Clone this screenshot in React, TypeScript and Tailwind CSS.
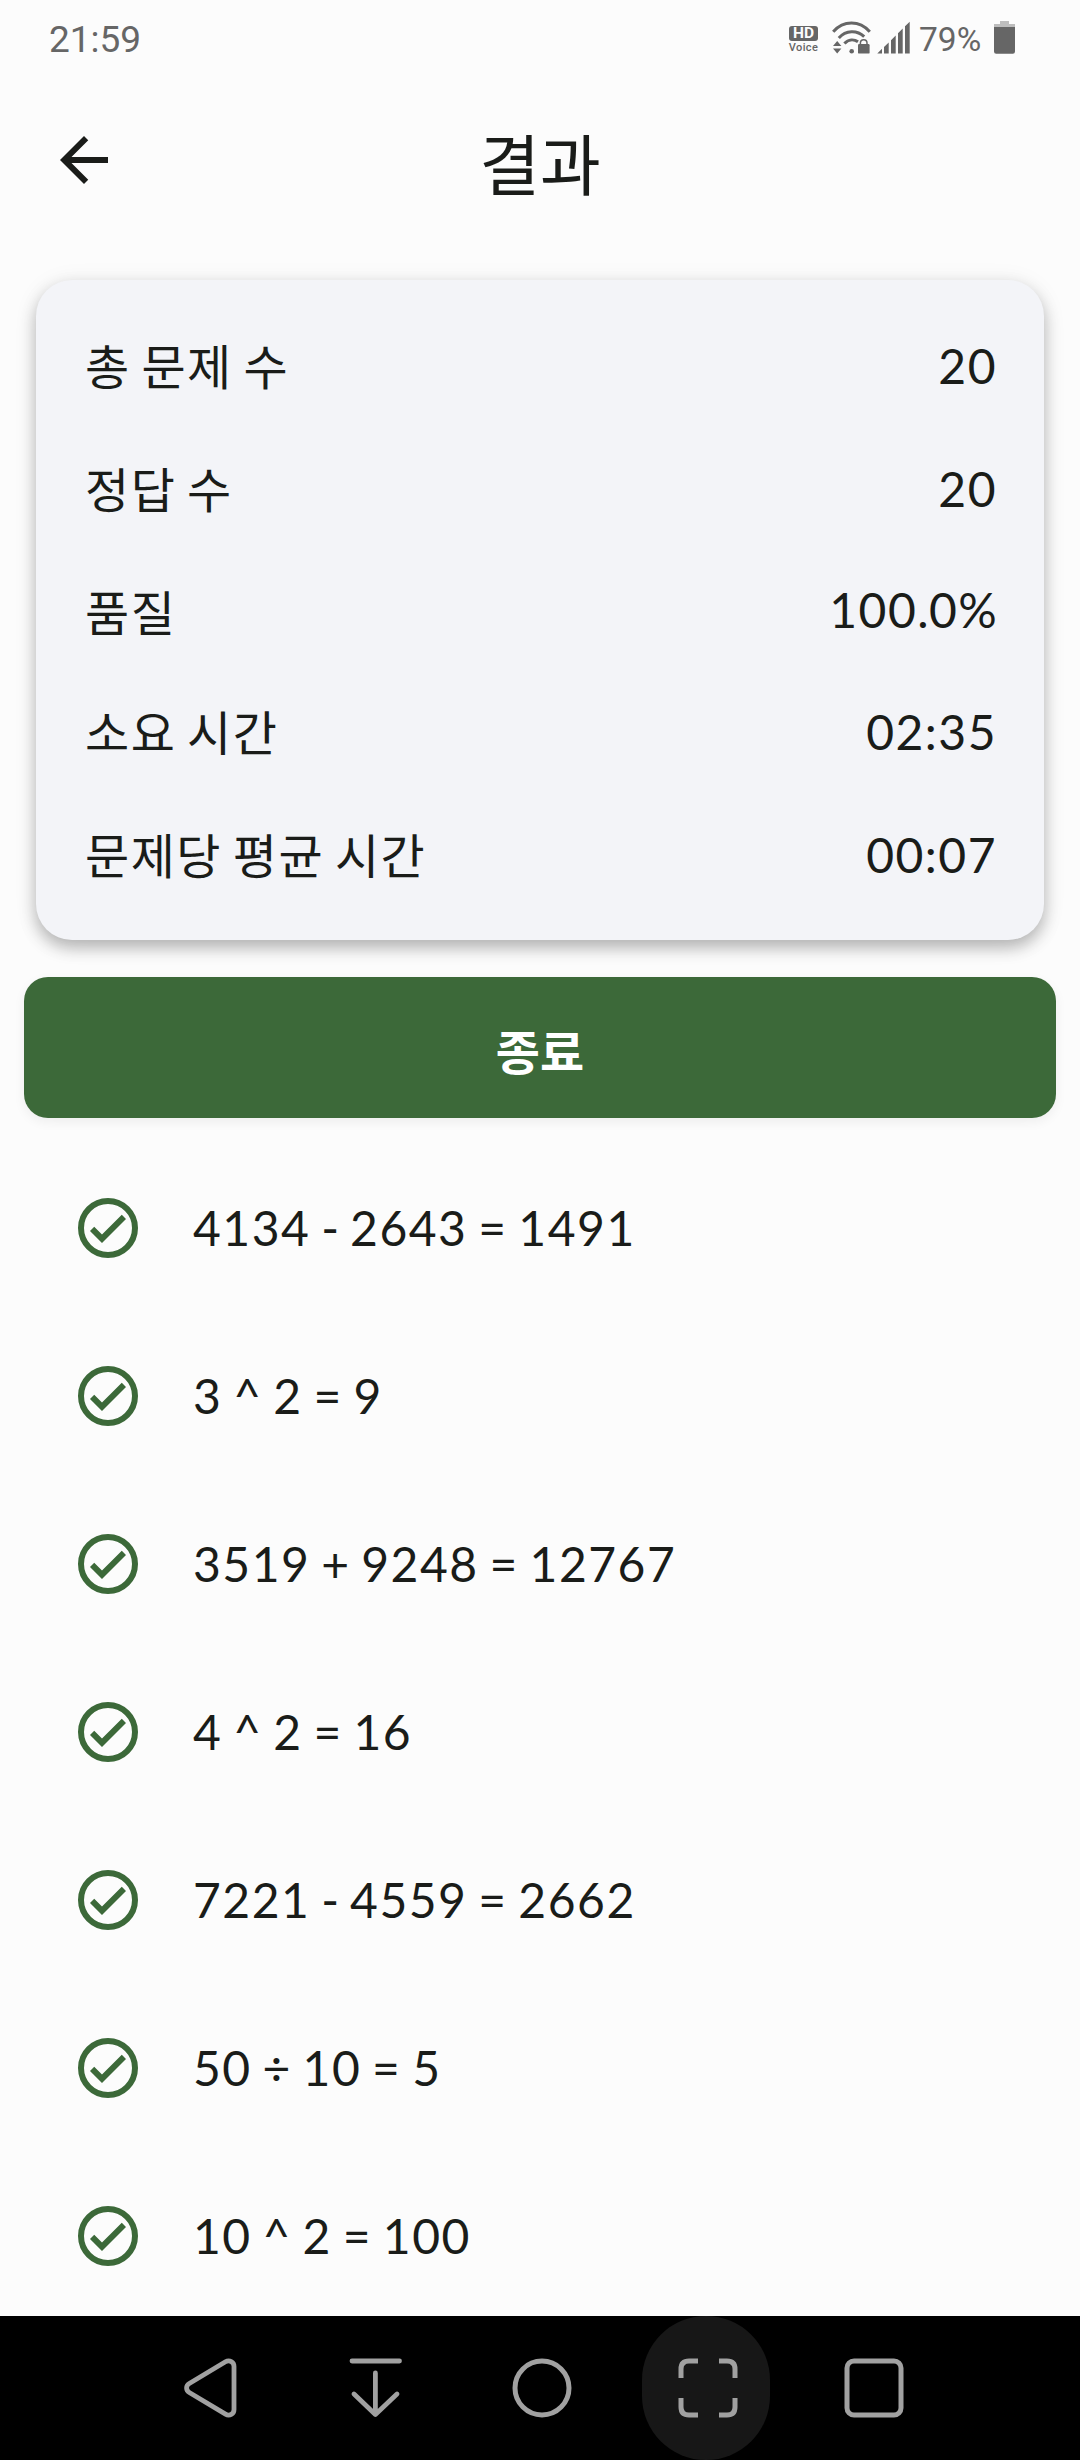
const stats = [
  { label: '총 문제 수', value: '20', row: 'h-[123px]', nudge: 'mt-[3px]' },
  { label: '정답 수', value: '20', row: 'h-[123px]', nudge: 'mt-[3px]' },
  { label: '품질', value: '100.0%', row: 'h-[119px]', nudge: 'mt-[6px]' },
  { label: '소요 시간', value: '02:35', row: 'h-[126px]', nudge: 'mt-[2px]' },
  { label: '문제당 평균 시간', value: '00:07', row: 'h-[120px]', nudge: 'mt-[2px]' },
];

const answers = [
  '4134 - 2643 = 1491',
  '3 ^ 2 = 9',
  '3519 + 9248 = 12767',
  '4 ^ 2 = 16',
  '7221 - 4559 = 2662',
  '50 ÷ 10 = 5',
  '10 ^ 2 = 100',
];

/** Sets punctuation a little tighter than the digits around it. */
function Tight({ text }: { text: string }) {
  return (
    <>
      {text.split(/([-.%])/).map((part, i) =>
        /^[-.%]$/.test(part) ? (
          <span key={i} className="tracking-[0.3px]">
            {part}
          </span>
        ) : (
          part
        ),
      )}
    </>
  );
}

function StatusBar() {
  return (
    <div className="flex h-[84px] shrink-0 items-start justify-between pr-16 pl-[49px] font-['Roboto',sans-serif] text-[#666666]">
      <span className="mt-[18px] text-[37px] leading-[44px]">21:59</span>
      <div className="flex items-start">
        <div className="mt-[26px] flex w-[29px] flex-col items-center">
          <div className="flex h-[15px] w-[29px] items-center justify-center rounded-[3px] bg-[#666666] text-[15.5px] leading-[15px] font-bold text-[#fcfcfc]">
            HD
          </div>
          <span className="mt-px text-[11px] leading-[11px] font-medium tracking-[0.4px]">Voice</span>
        </div>
        <svg className="mt-5 ml-[14px] h-9 w-10" viewBox="0 0 40 36" fill="none">
          <g stroke="#666666" strokeWidth="3">
            <path d="M1.2 11.8C11.5 0.2 27.5 0.2 37.8 11.8" />
            <path d="M6.8 18C14 9.8 25 9.8 32.2 16.6" />
            <path d="M12.4 23.6C16.6 19 22 19 26 21.8" />
          </g>
          <circle cx="19.7" cy="31.2" r="2.3" fill="#666666" />
          <path d="M1 26l4.2-5 4.2 5zM1 28.6h8.4l-4.2 4.8z" fill="#666666" />
          <rect x="26" y="24" width="11.6" height="9.6" rx="1.2" fill="#666666" />
          <path d="M28.4 25v-2a3.3 3.3 0 016.6 0v2" stroke="#666666" strokeWidth="1.5" />
        </svg>
        <svg className="mt-5 ml-[5px] h-9 w-9" viewBox="0 0 36 36" fill="#666666">
          <path d="M0.3 33.5L5 28.8v4.7zM7 27l4.7-4.6v11.1H7zM14 20.2l4.7-4.6v17.9H14zM21 13.2l4.7-4.6v24.9H21zM28 6.3l4.7-4.6v31.8H28z" />
        </svg>
        <span className="mt-5 ml-[6px] w-[74px] text-[33.5px] leading-10">79%</span>
        <svg className="mt-5 ml-px h-9 w-[22px]" viewBox="0 0 22 36">
          <path d="M6 1h9v3h6v3H0V4h6z" fill="#bdbdbd" />
          <path d="M0 7h21v24.5a2.2 2.2 0 01-2.2 2.2H2.2A2.2 2.2 0 010 31.5z" fill="#666666" />
        </svg>
      </div>
    </div>
  );
}

function AppBar() {
  return (
    <header className="grid h-[160px] shrink-0 grid-cols-[120px_1fr_120px] items-start text-[#1a1c19]">
      <svg className="mt-10 ml-12 h-[72px] w-[72px]" viewBox="0 0 24 24" fill="#1a1c19">
        <path d="M20 11H7.83l5.59-5.59L12 4l-8 8 8 8 1.41-1.41L7.83 13H20v-2z" />
      </svg>
      <h1 className="mt-[41px] text-center font-['Lato','Noto_Sans_CJK_KR',sans-serif] text-[66px] leading-[80px]">
        결과
      </h1>
    </header>
  );
}

function CheckIcon() {
  return (
    <svg className="h-[72px] w-[72px]" viewBox="0 0 24 24" fill="#3c6939">
      <circle cx="12" cy="12" r="9" fill="none" stroke="#3c6939" strokeWidth="2" />
      <path d="M16.59 7.58L10 14.17l-2.59-2.58L6 13l4 4 8-8z" />
    </svg>
  );
}

function NavBar() {
  return (
    <nav className="flex h-36 shrink-0 bg-black pl-[127px]">
      <div className="flex w-[166px] items-center justify-center">
        <svg className="h-16 w-16" viewBox="0 0 64 64" fill="none" stroke="#a1a1a1" strokeWidth="4.8">
          <path d="M11.3 27.5L47.5 5.8C51.5 3.5 56 6 56 10.5V53.5C56 58 51.5 60.5 47.5 58.2L11.3 36.5C7.7 34.3 7.7 29.7 11.3 27.5Z" />
        </svg>
      </div>
      <div className="flex w-[166px] items-center justify-center">
        <svg
          className="h-16 w-16"
          viewBox="0 0 64 64"
          fill="none"
          stroke="#a1a1a1"
          strokeWidth="4.8"
          strokeLinecap="round"
          strokeLinejoin="round"
        >
          <path d="M8 5H55.5M31.4 17V58.5M10 38L31.4 58.5L53 38" />
        </svg>
      </div>
      <div className="flex w-[166px] items-center justify-center">
        <svg className="h-16 w-16" viewBox="0 0 64 64" fill="none" stroke="#a1a1a1" strokeWidth="5">
          <circle cx="32" cy="32" r="27" />
        </svg>
      </div>
      <div className="flex w-[166px] items-center pl-[17px]">
        <div className="flex h-36 w-[128px] items-center justify-center rounded-full bg-[#171717]">
          <svg className="ml-1 h-16 w-16" viewBox="0 0 64 64" fill="none" stroke="#a1a1a1" strokeWidth="5">
            <path d="M22 5H13Q5 5 5 13V22M43 5H51Q59 5 59 13V22M5 42V51Q5 59 13 59H22M59 42V51Q59 59 51 59H43" />
          </svg>
        </div>
      </div>
      <div className="flex w-[166px] items-center justify-center">
        <svg className="h-16 w-16" viewBox="0 0 64 64" fill="none" stroke="#a1a1a1" strokeWidth="5">
          <rect x="5" y="5" width="54" height="54" rx="7" />
        </svg>
      </div>
    </nav>
  );
}

export default function App() {
  return (
    <div className="flex h-[2460px] w-[1080px] flex-col overflow-hidden bg-[#fcfcfc]">
      <StatusBar />
      <AppBar />
      <main className="flex min-h-0 flex-1 flex-col overflow-hidden pt-9">
        <section className="relative mx-9 flex h-[660px] shrink-0 flex-col rounded-[36px] bg-[#f3f4f8] pt-6 pr-[47px] pl-[49px] shadow-[0_8px_16px_rgba(0,0,0,0.25),0_3px_24px_rgba(0,0,0,0.08)]">
          {stats.map((s) => (
            <div
              key={s.label}
              className={`flex shrink-0 items-center justify-between font-['Lato','Noto_Sans_CJK_KR',sans-serif] text-[48px] leading-[64px] tracking-[1.5px] [word-spacing:-3px] text-[#1a1c19] ${s.row}`}
            >
              <span className={s.nudge}>{s.label}</span>
              <span>
                <Tight text={s.value} />
              </span>
            </div>
          ))}
        </section>
        <button className="relative mx-6 mt-[37px] flex h-[141px] shrink-0 items-center justify-center rounded-3xl bg-[#3c6939] pt-[9px] font-['Lato','Noto_Sans_CJK_KR',sans-serif] text-[48px] leading-[64px] font-bold text-white shadow-[0_4px_12px_rgba(0,0,0,0.06)]">
          종료
        </button>
        <ul className="mt-[26px] shrink-0">
          {answers.map((a) => (
            <li
              key={a}
              className="flex h-[168px] items-center gap-[49px] pl-[72px] font-['Lato',sans-serif] text-[48px] leading-[72px] tracking-[1.5px] [word-spacing:-3px] text-[#1a1c19]"
            >
              <CheckIcon />
              <span>
                <Tight text={a} />
              </span>
            </li>
          ))}
        </ul>
      </main>
      <NavBar />
    </div>
  );
}
